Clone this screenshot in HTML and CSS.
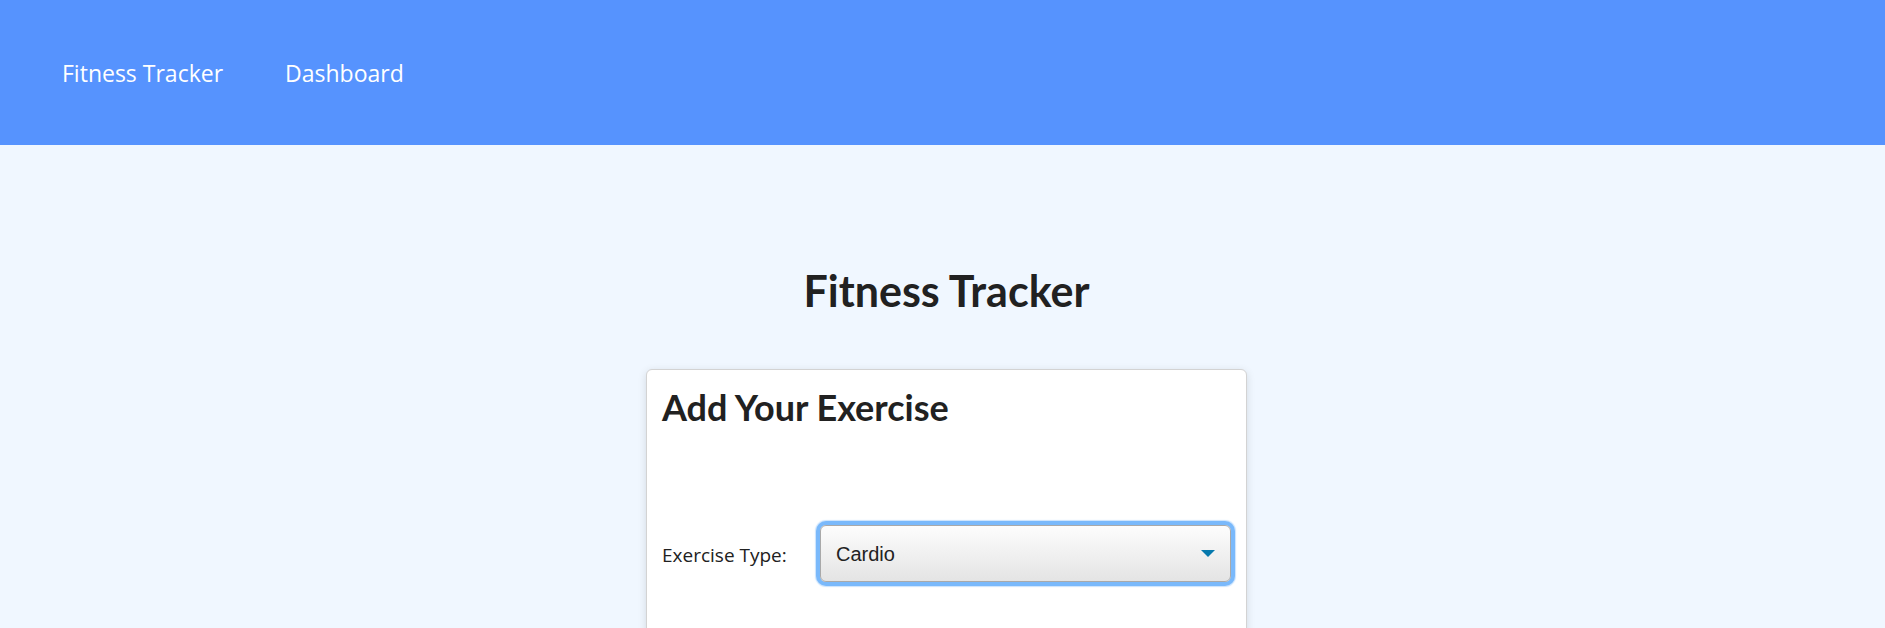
FILE: index.html
```html
<!DOCTYPE html>
<html lang="en">
<head>
<meta charset="utf-8">
<title>Fitness Tracker</title>
<link rel="stylesheet" href="styles.css">
</head>
<body>
<header class="topbar">
  <nav class="nav">
    <a class="nav-link" href="#">Fitness Tracker</a>
    <a class="nav-link" href="#">Dashboard</a>
  </nav>
</header>
<main class="main">
  <h1 class="page-title">Fitness Tracker</h1>
  <section class="card">
    <h2 class="card-title">Add Your Exercise</h2>
    <form class="form">
      <div class="form-row">
        <label class="form-label" for="type">Exercise Type:</label>
        <div class="select-wrap">
          <select id="type" class="select">
            <option>Cardio</option>
            <option>Resistance</option>
          </select>
          <span class="select-arrow"></span>
        </div>
      </div>
    </form>
  </section>
</main>
</body>
</html>
```
FILE: styles.css
```css
html, body {
  margin: 0;
  padding: 0;
}
body {
  background: #f0f7ff;
  font-family: "Open Sans", "Noto Sans", sans-serif;
  color: #212121;
}
.topbar {
  background: #5693fe;
  height: 145px;
  display: flex;
  align-items: center;
}
.nav {
  display: flex;
  gap: 62px;
  padding-left: 62px;
}
.nav-link {
  color: #ffffff;
  text-decoration: none;
  font-size: 23px;
}
.main {
  padding-left: 8px;
  display: flex;
  flex-direction: column;
  align-items: center;
}
.page-title {
  font-family: "Lato", sans-serif;
  font-weight: 700;
  font-size: 43px;
  line-height: 1.2;
  margin: 120px 0 52px;
  color: #212121;
}
.card {
  width: 569px;
  background: #ffffff;
  border: 1px solid #d3d3d3;
  border-radius: 6px;
  box-shadow: 0 2px 8px rgba(0, 0, 0, 0.12);
  padding: 16px 15px 80px;
}
.card-title {
  font-family: "Lato", sans-serif;
  font-weight: 700;
  font-size: 36px;
  line-height: 1.2;
  margin: 0;
  color: #212121;
}
.form {
  margin-top: 96px;
}
.form-row {
  display: flex;
  align-items: center;
}
.form-label {
  font-size: 19px;
  width: 158px;
  flex: none;
  color: #212121;
  padding-top: 3px;
}
.select-wrap {
  position: relative;
  flex: 1;
}
.select {
  appearance: none;
  -webkit-appearance: none;
  display: block;
  width: 100%;
  height: 57px;
  box-sizing: border-box;
  border: 1px solid #a9a9a9;
  border-radius: 6px;
  background: linear-gradient(#fdfdfd, #e4e4e4);
  box-shadow: 0 0 0 4px #7ab9fb, 0 0 1px 5px rgba(122, 185, 251, 0.4);
  font-family: "Liberation Sans", Arial, sans-serif;
  font-size: 20px;
  color: #222;
  padding: 2px 15px 0;
  outline: none;
}
.select-arrow {
  position: absolute;
  right: 16px;
  top: 25px;
  width: 0;
  height: 0;
  border-left: 7px solid transparent;
  border-right: 7px solid transparent;
  border-top: 7px solid #0679ad;
  pointer-events: none;
}
```
